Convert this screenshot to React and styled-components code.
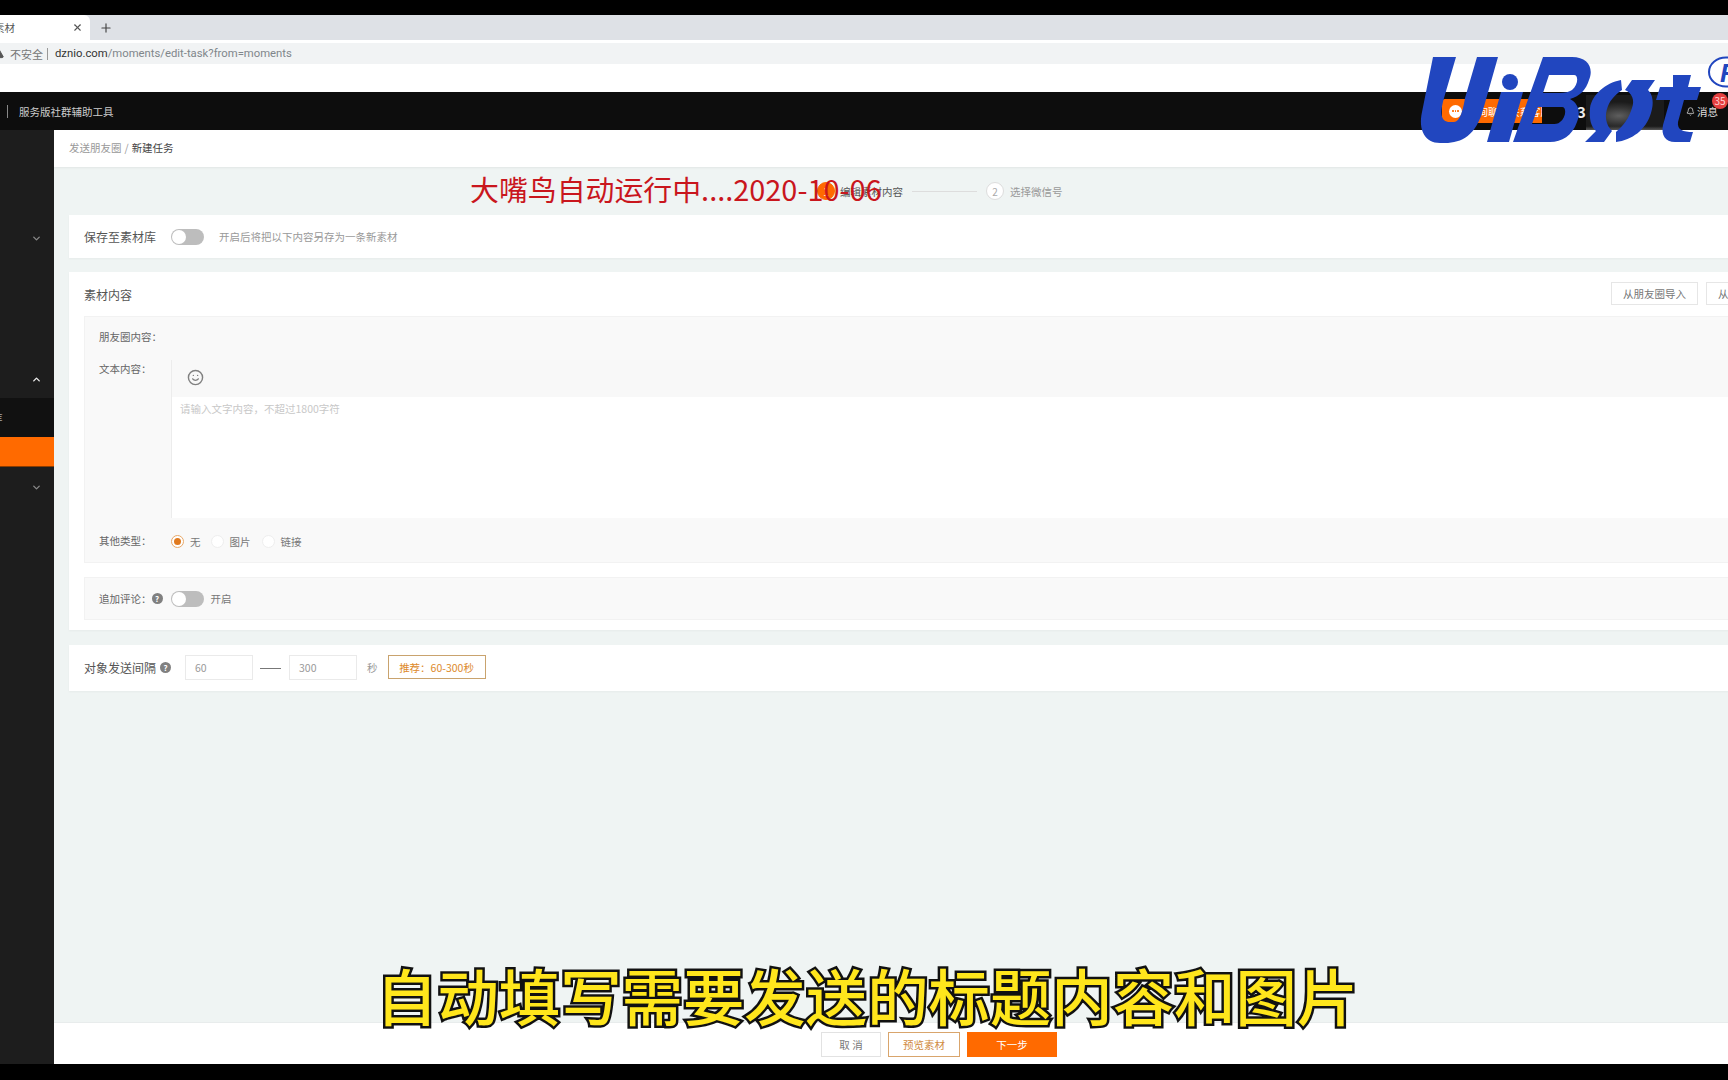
import React from 'react';
import styled, { createGlobalStyle } from 'styled-components';
import { X, Plus, ChevronDown, ChevronUp, Smile, Bell, TriangleAlert } from 'lucide-react';

const Global = createGlobalStyle`
  html, body { margin: 0; padding: 0; background: #000; overflow: hidden; }
  * { box-sizing: border-box; }
  body { font-family: "Noto Sans CJK SC", "Noto Sans", sans-serif; }
`;

const Page = styled.div`
  position: relative;
  width: 1728px;
  height: 1080px;
  overflow: hidden;
  display: flex;
  flex-direction: column;
  background: #000;
  padding: 15px 0 16px;
`;

const TabStrip = styled.div`
  height: 25px;
  flex: none;
  display: flex;
  align-items: center;
  background: #dee1e6;
  color: #333;
`;
const Tab = styled.div`
  width: 90px;
  height: 25px;
  background: #fff;
  border-radius: 0 6px 0 0;
  display: flex;
  align-items: center;
  justify-content: space-between;
  padding-right: 7px;
  font-size: 10.5px;
  color: #555;
  overflow: hidden;
`;
const TabTitle = styled.span`margin-left: -6px;`;
const NewTab = styled.span`display: flex; margin-left: 9px; color: #444;`;

const AddressRow = styled.div`
  height: 52px;
  flex: none;
  background: #fff;
  padding-top: 3px;
`;
const Omnibox = styled.div`
  height: 21px;
  background: #f1f3f4;
  display: flex;
  align-items: center;
  font-size: 11px;
  color: #777;
  padding-left: 10px;
  position: relative;
`;
const Warn = styled.span`
  position: absolute;
  left: -7px;
  top: 5px;
  display: flex;
  color: #555;
`;
const Sep = styled.span`
  width: 1px;
  height: 12px;
  background: #999;
  margin: 0 7px 0 4px;
`;
const Url = styled.span`
  font-family: Roboto, "Open Sans", sans-serif;
  font-size: 11.3px;
  color: #80868b;
  b { color: #333; font-weight: 400; }
`;

const Header = styled.div`
  height: 38px;
  flex: none;
  background: #0d0d0d;
  display: flex;
  align-items: center;
  justify-content: space-between;
  padding-left: 7px;
  color: #ccc;
  font-size: 10.5px;
`;
const HeaderLeft = styled.div`display: flex; align-items: center;`;
const HeaderDivider = styled.span`
  width: 1px;
  height: 13px;
  background: #888;
  margin-right: 11px;
`;
const HeaderRight = styled.div`display: flex; align-items: center; height: 100%;`;
const ServiceButton = styled.div`
  width: 100px;
  height: 24px;
  background: #ff6a00;
  border-radius: 3px 0 0 3px;
  display: flex;
  align-items: center;
  gap: 5px;
  padding-left: 7px;
  color: #fff;
  font-size: 10.5px;
  white-space: nowrap;
  overflow: hidden;
`;
const ChatDot = styled.span`
  width: 13px;
  height: 13px;
  border-radius: 50%;
  background: #fff;
  flex: none;
  display: flex;
  align-items: center;
  justify-content: center;
  gap: 1px;
  i { width: 1.5px; height: 1.5px; background: #ff6a00; border-radius: 50%; }
`;
const CountDigit = styled.span`
  margin-left: 35px;
  font-size: 15px;
  font-weight: 700;
  color: #eee;
  width: 9px;
`;
const BlurredName = styled.div`
  width: 78px;
  height: 40px;
  align-self: flex-start;
  margin-top: 3px;
  margin-bottom: -5px;
  background:
    linear-gradient(180deg, rgba(190,190,190,0) 0 78%, rgba(190,190,190,.85) 100%),
    radial-gradient(ellipse 32px 14px at 42% 52%, #5e5e5e 0%, #333 60%, #1b1b1b 100%);
`;
const Messages = styled.div`
  position: relative;
  margin-left: 22px;
  width: 42px;
  display: flex;
  align-items: center;
  gap: 2px;
  color: #ddd;
  font-size: 10.5px;
`;
const Badge = styled.span`
  position: absolute;
  left: 26px;
  top: -11px;
  width: 16px;
  height: 16px;
  border-radius: 50%;
  background: #e5403f;
  color: #ffd5d5;
  font-size: 10px;
  display: flex;
  align-items: center;
  justify-content: center;
`;

const Body = styled.div`
  flex: 1;
  min-height: 0;
  display: flex;
`;
const Sidebar = styled.div`
  width: 54px;
  flex: none;
  background: #1d1d1d;
  padding-top: 88px;
  overflow: hidden;
`;
const SideItem = styled.div`
  height: ${p => p.$h || 40}px;
  margin-top: ${p => p.$mt || 0}px;
  display: flex;
  align-items: center;
  justify-content: flex-end;
  padding-right: 12px;
  color: ${p => p.$bright ? '#eee' : '#888'};
`;
const SubRow = styled.div`
  height: 39px;
  background: #111;
  color: #aaa;
  font-size: 10.5px;
  display: flex;
  align-items: center;
  margin-left: -8px;
`;
const ActiveRow = styled.div`
  height: 30px;
  background: #ff6a00;
  border-bottom: 1px solid #8a3c00;
`;

const Main = styled.div`
  flex: 1;
  min-width: 0;
  display: flex;
  flex-direction: column;
  background: #eff4f3;
  overflow: hidden;
`;
const Breadcrumb = styled.div`
  height: 37px;
  flex: none;
  background: #fff;
  display: flex;
  align-items: center;
  padding: 0 0 2px 15px;
  font-size: 10.5px;
  color: #999;
  box-shadow: 0 1px 2px rgba(0,0,0,.06);
  b { font-weight: 400; color: #444; margin-left: 3px; }
  span { margin-right: 3px; }
`;
const Content = styled.div`
  flex: 1;
  min-height: 0;
  width: 1755px;
  padding-left: 15px;
`;
const Steps = styled.div`
  height: 48px;
  display: flex;
  align-items: center;
  padding-left: 748px;
  font-size: 10.5px;
`;
const StepDot = styled.span`
  width: 18px;
  height: 18px;
  border-radius: 50%;
  flex: none;
  display: flex;
  align-items: center;
  justify-content: center;
  background: ${p => p.$on ? '#ff6a00' : '#fff'};
  border: 1px solid ${p => p.$on ? '#ff6a00' : '#ddd'};
  color: ${p => p.$on ? '#fff' : '#aaa'};
  font-size: 10px;
`;
const StepLabel = styled.span`
  margin-left: ${p => p.$ml}px;
  color: ${p => p.$on ? '#555' : '#999'};
`;
const StepLine = styled.span`
  width: 65px;
  height: 1px;
  background: #ddd;
  margin: 0 9px;
`;
const Card = styled.div`
  background: #fff;
  box-shadow: 0 1px 2px rgba(0,0,0,.04);
  margin-top: ${p => p.$mt || 0}px;
`;
const SaveCard = styled(Card)`
  height: 43px;
  display: flex;
  align-items: center;
  padding-left: 15px;
`;
const StrongLabel = styled.span`
  font-size: 12px;
  color: #555;
  white-space: nowrap;
`;
const Toggle = styled.span`
  width: 33px;
  height: 16px;
  border-radius: 8px;
  background: #bdbdbd;
  flex: none;
  display: block;
  position: relative;
  margin-left: ${p => p.$ml}px;
  &::after {
    content: "";
    position: absolute;
    left: 1px;
    top: 1px;
    width: 14px;
    height: 14px;
    border-radius: 50%;
    background: #fff;
  }
`;
const Hint = styled.span`
  font-size: 10.5px;
  color: #999;
  margin-left: 15px;
`;
const MaterialCard = styled(Card)`
  height: 358px;
  padding: 0 16px 0 15px;
`;
const MaterialHead = styled.div`
  height: 44px;
  display: flex;
  align-items: center;
  justify-content: space-between;
`;
const ImportGroup = styled.div`display: flex; gap: 8px; margin-top: -2px;`;
const ImportButton = styled.span`
  width: 87px;
  height: 23px;
  display: flex;
  align-items: center;
  justify-content: center;
  background: #fff;
  border: 1px solid #e6e6e6;
  font-size: 10.5px;
  color: #777;
`;
const Panel = styled.div`
  background: #f9f9f9;
  border: 1px solid #f2f2f2;
  padding: 11px 15px 12px 14px;
  display: grid;
  grid-template-columns: 72px 1fr;
  row-gap: 14px;
`;
const FieldLabel = styled.span`
  font-size: 10.5px;
  line-height: 18px;
  height: 18px;
  color: #666;
  white-space: nowrap;
`;
const Empty = styled.span``;
const Editor = styled.div`
  height: 158px;
  background: #fff;
  border-left: 1px solid #ececec;
`;
const EditorBar = styled.div`
  height: 37px;
  background: #f8f8f8;
  display: flex;
  align-items: center;
  padding: 0 0 2px 15px;
  color: #808080;
`;
const Placeholder = styled.div`
  font-size: 10.5px;
  line-height: 18px;
  color: #c8c8c8;
  padding: 3px 0 0 8px;
`;
const RadioRow = styled.div`
  display: flex;
  align-items: center;
  height: 18px;
  font-size: 10.5px;
  color: #777;
`;
const Radio = styled.span`
  width: 13px;
  height: 13px;
  border-radius: 50%;
  background: #fff;
  border: 1px solid ${p => p.$on ? '#e8a868' : '#eee'};
  margin-left: ${p => p.$ml || 0}px;
  display: flex;
  align-items: center;
  justify-content: center;
  i { width: 7px; height: 7px; border-radius: 50%; background: #e07a1f; }
`;
const RadioText = styled.span`margin-left: 6px;`;
const CommentPanel = styled.div`
  height: 43px;
  margin-top: 14px;
  background: #f9f9f9;
  border: 1px solid #f2f2f2;
  display: flex;
  align-items: center;
  padding-left: 14px;
`;
const Help = styled.span`
  width: 11px;
  height: 11px;
  border-radius: 50%;
  background: #808080;
  color: #fff;
  font-size: 8px;
  font-weight: 700;
  display: flex;
  align-items: center;
  justify-content: center;
  flex: none;
  margin-left: ${p => p.$ml}px;
`;
const Small = styled.span`
  font-size: 10.5px;
  color: ${p => p.$c || '#777'};
  margin-left: ${p => p.$ml || 0}px;
`;
const IntervalCard = styled(Card)`
  height: 46px;
  display: flex;
  align-items: center;
  padding: 0 0 2px 15px;
`;
const NumBox = styled.span`
  width: 68px;
  height: 25px;
  background: #fff;
  border: 1px solid #eaeaea;
  font-size: 10.5px;
  color: #999;
  display: flex;
  align-items: center;
  padding-left: 9px;
  margin-left: ${p => p.$ml}px;
`;
const Dash = styled.span`
  width: 21px;
  height: 1px;
  background: #777;
  margin-left: 7px;
  margin-top: 2px;
`;
const Tip = styled.span`
  width: 98px;
  height: 24px;
  border: 1px solid #c9a36e;
  color: #dd8a2c;
  background: #fff;
  font-size: 10.5px;
  display: flex;
  align-items: center;
  justify-content: center;
  margin-left: 10px;
`;
const Footer = styled.div`
  height: 42px;
  flex: none;
  background: #fff;
  border-top: 1px solid #e8ecec;
  display: flex;
  align-items: center;
  gap: 7px;
  padding: 2px 0 0 767px;
`;
const FootButton = styled.span`
  width: ${p => p.$w}px;
  height: 25px;
  display: flex;
  align-items: center;
  justify-content: center;
  font-size: 10.5px;
  background: ${p => p.$kind === 'primary' ? '#ff6a00' : '#fff'};
  color: ${p => p.$kind === 'primary' ? '#fff' : p.$kind === 'outline' ? '#d08a3e' : '#777'};
  border: 1px solid ${p => p.$kind === 'primary' ? '#ff6a00' : p.$kind === 'outline' ? '#d9a56c' : '#e2e2e2'};
`;

const RedStamp = styled.div`
  position: absolute;
  left: 470px;
  top: 166px;
  font-size: 28.9px;
  line-height: 44px;
  color: #c9161d;
  white-space: nowrap;
`;
const Subtitle = styled.div`
  position: absolute;
  left: 376px;
  top: 950px;
  font-size: 61.4px;
  line-height: 90px;
  font-weight: 500;
  color: #ffe61c;
  white-space: nowrap;
  -webkit-text-stroke: 5px #111;
  paint-order: stroke fill;
`;
const LogoSvg = styled.svg`
  position: absolute;
  left: 1415px;
  top: 50px;
  width: 313px;
  height: 100px;
`;

function Logo() {
  const blue = '#2146bf';
  return (
    <LogoSvg viewBox="1415 50 313 100">
      <path fill={blue} d="M1433 57H1456L1444 98C1440 112 1440 122 1450 122H1454C1460 122 1463 110 1465 98L1477 57H1498L1483 110C1476 135 1462 143 1445 143H1440C1425 143 1418 130 1422 112Z" />
      <circle fill={blue} cx="1510" cy="82" r="8" />
      <path fill={blue} d="M1501 92H1523L1509 142H1487Z" />
      <path fill={blue} fillRule="evenodd" d="M1543 57H1572C1588 57 1594 68 1589 80C1586 90 1580 96 1570 99C1578 103 1581 112 1577 122C1572 136 1562 142 1550 142H1513ZM1549 75H1574C1579 75 1578 85 1572 90C1569 92 1565 93 1560 93H1543ZM1538 107H1562C1567 107 1566 118 1560 122C1558 124 1555 124 1552 124H1532Z" />
      <path fill={blue} d="M1621 80C1605 83 1592 95 1590 108C1589 119 1591 127 1596 131L1585 142H1604L1612 131C1606 125 1604 116 1608 106C1611 99 1616 94 1622 90Z" />
      <path fill={blue} d="M1655 80H1632L1625 90C1632 93 1635 100 1632 108C1629 118 1624 125 1616 132V142C1632 140 1646 130 1651 113C1654 103 1653 95 1648 90Z" />
      <path fill={blue} d="M1673 75H1691L1688 87H1701L1697 100H1684L1678 122C1677 130 1683 132 1693 132L1690 142H1675C1665 142 1661 135 1663 125L1670 100H1656L1660 87H1673Z" />
      <ellipse cx="1726" cy="72" rx="17" ry="14.5" fill="#fff" stroke={blue} strokeWidth="2" />
      <text x="1720" y="82" fill={blue} fontFamily="Liberation Sans" fontWeight="700" fontStyle="italic" fontSize="26">R</text>
    </LogoSvg>
  );
}

export default function App() {
  return (
    <Page>
      <Global />
      <TabStrip>
        <Tab>
          <TabTitle>素材</TabTitle>
          <X size={11} strokeWidth={2.4} />
        </Tab>
        <NewTab><Plus size={14} strokeWidth={2} /></NewTab>
      </TabStrip>
      <AddressRow>
        <Omnibox>
          <Warn><TriangleAlert size={11} fill="#555" /></Warn>
          不安全<Sep />
          <Url><b>dznio.com</b>/moments/edit-task?from=moments</Url>
        </Omnibox>
      </AddressRow>
      <Header>
        <HeaderLeft>
          <HeaderDivider />
          服务版社群辅助工具
        </HeaderLeft>
        <HeaderRight>
          <ServiceButton><ChatDot><i /><i /><i /></ChatDot>咨询聊天联系客服</ServiceButton>
          <CountDigit>3</CountDigit>
          <BlurredName />
          <Messages>
            <Bell size={9} />消息
            <Badge>35</Badge>
          </Messages>
        </HeaderRight>
      </Header>
      <Body>
        <Sidebar>
          <SideItem><ChevronDown size={11} strokeWidth={3} /></SideItem>
          <SideItem $mt={102} $h={38} $bright><ChevronUp size={11} strokeWidth={3} /></SideItem>
          <SubRow>库</SubRow>
          <ActiveRow />
          <SideItem><ChevronDown size={11} strokeWidth={3} /></SideItem>
        </Sidebar>
        <Main>
          <Breadcrumb><span>发送朋友圈</span>/<b>新建任务</b></Breadcrumb>
          <Content>
            <Steps>
              <StepDot $on>1</StepDot>
              <StepLabel $on $ml={5}>编辑素材内容</StepLabel>
              <StepLine />
              <StepDot>2</StepDot>
              <StepLabel $ml={6}>选择微信号</StepLabel>
            </Steps>
            <SaveCard>
              <StrongLabel>保存至素材库</StrongLabel>
              <Toggle $ml={15} />
              <Hint>开启后将把以下内容另存为一条新素材</Hint>
            </SaveCard>
            <MaterialCard $mt={14}>
              <MaterialHead>
                <StrongLabel>素材内容</StrongLabel>
                <ImportGroup>
                  <ImportButton>从朋友圈导入</ImportButton>
                  <ImportButton>从素材库导入</ImportButton>
                </ImportGroup>
              </MaterialHead>
              <Panel>
                <FieldLabel>朋友圈内容：</FieldLabel>
                <Empty />
                <FieldLabel>文本内容：</FieldLabel>
                <Editor>
                  <EditorBar><Smile size={17} strokeWidth={2} /></EditorBar>
                  <Placeholder>请输入文字内容，不超过1800字符</Placeholder>
                </Editor>
                <FieldLabel>其他类型：</FieldLabel>
                <RadioRow>
                  <Radio $on><i /></Radio><RadioText>无</RadioText>
                  <Radio $ml={10} /><RadioText>图片</RadioText>
                  <Radio $ml={11} /><RadioText>链接</RadioText>
                </RadioRow>
              </Panel>
              <CommentPanel>
                <FieldLabel>追加评论：</FieldLabel>
                <Help $ml={0}>?</Help>
                <Toggle $ml={8} />
                <Small $ml={7}>开启</Small>
              </CommentPanel>
            </MaterialCard>
            <IntervalCard $mt={15}>
              <StrongLabel>对象发送间隔</StrongLabel>
              <Help $ml={4}>?</Help>
              <NumBox $ml={14}>60</NumBox>
              <Dash />
              <NumBox $ml={8}>300</NumBox>
              <Small $ml={10} $c="#999">秒</Small>
              <Tip>推荐：60-300秒</Tip>
            </IntervalCard>
          </Content>
          <Footer>
            <FootButton $w={60}>取 消</FootButton>
            <FootButton $w={72} $kind="outline">预览素材</FootButton>
            <FootButton $w={90} $kind="primary">下一步</FootButton>
          </Footer>
        </Main>
      </Body>
      <RedStamp>大嘴鸟自动运行中....2020-10-06</RedStamp>
      <Subtitle>自动填写需要发送的标题内容和图片</Subtitle>
      <Logo />
    </Page>
  );
}
